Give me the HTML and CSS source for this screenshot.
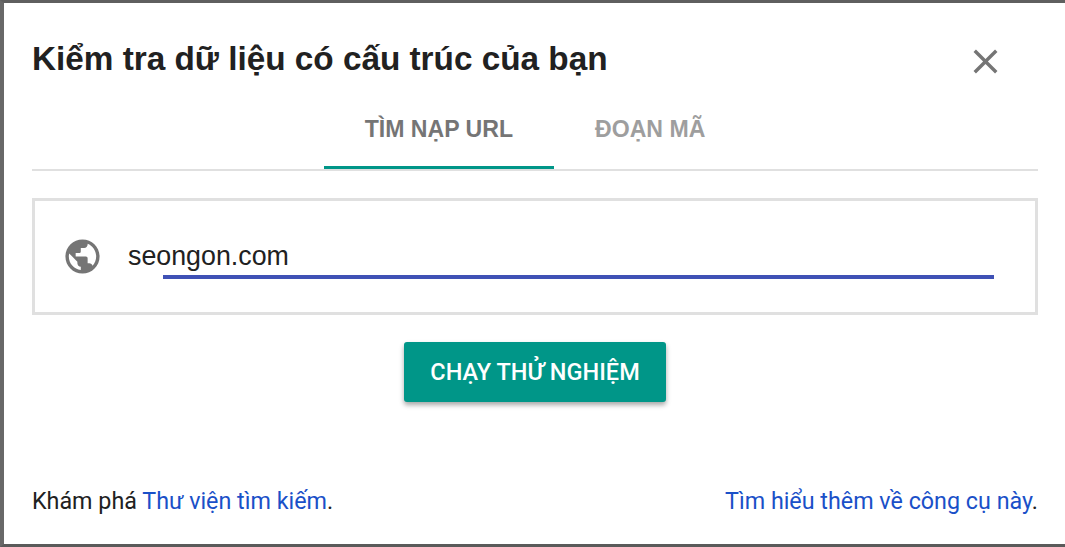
FILE: index.html
```html
<!DOCTYPE html>
<html lang="en">
<head>
  <meta charset="UTF-8">
  <meta name="viewport" content="width=device-width, initial-scale=1.0">
  <title>Kiểm tra dữ liệu có cấu trúc</title>
  <link rel="stylesheet" href="styles.css">
</head>
<body>
  <div class="dialog">
    <div class="header">
      <h1>Kiểm tra dữ liệu có cấu trúc của bạn</h1>
      <svg class="close-icon" viewBox="0 0 24 24"><path d="M19 6.41L17.59 5 12 10.59 6.41 5 5 6.41 10.59 12 5 17.59 6.41 19 12 13.41 17.59 19 19 17.59 13.41 12z"/></svg>
    </div>

    <div class="tabs">
      <div class="tab active">TÌM NẠP URL</div>
      <div class="tab">ĐOẠN MÃ</div>
    </div>

    <div class="url-card">
      <svg class="globe-icon" viewBox="0 0 24 24"><path d="M12 2C6.48 2 2 6.48 2 12s4.48 10 10 10 10-4.48 10-10S17.52 2 12 2zm-1 17.93c-3.95-.49-7-3.85-7-7.93 0-.62.08-1.21.21-1.79L9 15v1c0 1.1.9 2 2 2v1.93zm6.9-2.54c-.26-.81-1-1.39-1.9-1.39h-1v-3c0-.55-.45-1-1-1H8v-2h2c.55 0 1-.45 1-1V7h2c1.1 0 2-.9 2-2v-.41c2.93 1.19 5 4.06 5 7.41 0 2.08-.8 3.97-2.1 5.39z"/></svg>
      <div class="url-field">
        <span class="url-text">seongon.com</span>
        <div class="url-underline"></div>
      </div>
    </div>

    <div class="actions">
      <button class="run-btn">CHẠY THỬ NGHIỆM</button>
    </div>

    <div class="footer">
      <div>Khám phá <a href="#">Thư viện tìm kiếm</a>.</div>
      <div><a href="#">Tìm hiểu thêm về công cụ này</a>.</div>
    </div>
  </div>
</body>
</html>
```

FILE: styles.css
```css
* {
  box-sizing: border-box;
  margin: 0;
  padding: 0;
}

body {
  width: 1065px;
  height: 547px;
  overflow: hidden;
  background-color: #fff;
  font-family: 'Liberation Sans', Arial, sans-serif;
}

.dialog {
  height: 547px;
  background-color: #fff;
  border-top: 3px solid #5f5f5f;
  border-left: 4px solid #686868;
  border-bottom: 3px solid #5a5a5a;
  padding: 0 27px 0 28px;
  display: flex;
  flex-direction: column;
}

.header {
  display: flex;
  justify-content: space-between;
  align-items: center;
  height: 106px;
}

h1 {
  font-size: 33.3px;
  font-weight: bold;
  color: #212121;
  margin-top: 5px;
}

.close-icon {
  width: 41px;
  height: 41px;
  fill: #757575;
  margin-right: 32px;
  margin-top: 10px;
}

.tabs {
  display: flex;
  justify-content: center;
  height: 62px;
  border-bottom: 2px solid #e0e0e0;
}

.tab {
  height: 60px;
  padding: 0 41px;
  text-align: center;
  line-height: 40px;
  font-size: 23.1px;
  font-weight: bold;
  color: #9e9e9e;
}

.tab.active {
  color: #757575;
  border-bottom: 3px solid #009688;
}

.url-card {
  height: 117px;
  margin-top: 27px;
  border: 3px solid #e0e0e0;
  display: flex;
  align-items: center;
  padding-left: 27px;
}

.globe-icon {
  width: 41px;
  height: 41px;
  fill: #757575;
}

.url-field {
  position: relative;
  margin-left: 25px;
  flex: 1;
  font-size: 26.8px;
  color: #212121;
}

.url-underline {
  position: absolute;
  left: 35px;
  right: 41px;
  top: 34px;
  height: 4px;
  background-color: #3f51b5;
}

.actions {
  display: flex;
  justify-content: center;
  margin-top: 27px;
}

.run-btn {
  width: 262px;
  height: 60px;
  background-color: #009688;
  color: #fff;
  font-family: Roboto, sans-serif;
  font-size: 23.5px;
  font-weight: 500;
  border: none;
  border-radius: 3px;
  box-shadow: 0 3px 5px rgba(0, 0, 0, 0.35);
}

.footer {
  display: flex;
  justify-content: space-between;
  margin-top: 85px;
  font-family: Roboto, sans-serif;
  font-size: 23.3px;
  color: #212121;
}

.footer a {
  color: #1a50c8;
  text-decoration: none;
}
```
